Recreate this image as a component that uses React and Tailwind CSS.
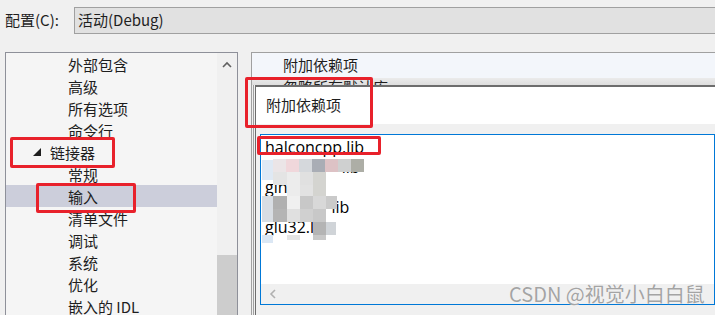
import React from 'react';

const treeRows = [
  { label: '外部包含', indent: 'child' },
  { label: '高级', indent: 'child' },
  { label: '所有选项', indent: 'child' },
  { label: '命令行', indent: 'child' },
  { label: '链接器', indent: 'parent' },
  { label: '常规', indent: 'child' },
  { label: '输入', indent: 'child', selected: true },
  { label: '清单文件', indent: 'child' },
  { label: '调试', indent: 'child' },
  { label: '系统', indent: 'child' },
  { label: '优化', indent: 'child' },
  { label: '嵌入的 IDL', indent: 'child' },
];

// pixelated blur over the hidden library names (page coords)
const mosaic = [
  [262, 160, 11, 20, '#dfe9f4'],
  [273, 159, 13, 13, '#ebe5e7'], [286, 159, 13, 13, '#f0d7db'], [299, 159, 13, 13, '#d5d8dc'],
  [312, 159, 13, 13, '#a9adb5'], [325, 159, 13, 13, '#ddc2c5'], [338, 159, 13, 13, '#cfd0d0'],
  [351, 159, 13, 13, '#adaea6'],
  [273, 172, 14, 13, '#e4e4e4'], [287, 172, 13, 13, '#ececec'], [300, 172, 13, 13, '#e0e0e0'],
  [313, 172, 13, 13, '#d4d4d0'],
  [287, 185, 13, 11, '#ececec'], [300, 185, 13, 11, '#e2e2e2'], [313, 185, 13, 11, '#d4d4d0'],
  [262, 196, 11, 26, '#d8dde3'], [273, 196, 14, 13, '#b0b0b0'], [287, 196, 13, 13, '#f0f0f0'],
  [300, 196, 13, 13, '#c8c8c8'], [313, 196, 13, 13, '#d8d8d8'], [326, 196, 11, 13, '#cacaca'],
  [273, 209, 14, 13, '#b4b4b4'], [287, 209, 13, 13, '#e0e0e0'], [300, 209, 13, 13, '#d0d0d0'],
  [313, 209, 13, 13, '#c8c8c8'],
  [313, 222, 13, 13, '#b4b4b4'], [326, 222, 10, 13, '#d0d4d8'],
  [262, 235, 11, 8, '#dbe7f4'], [287, 235, 13, 5, '#e4e4e4'], [313, 235, 13, 5, '#c8c8c8'],
];

function RedBox({ className }) {
  return <div className={`absolute rounded-[2px] border-[3px] border-[#e8212b] ${className}`} />;
}

function TreeRow({ label, indent, selected }) {
  return (
    <div className={`flex h-[22px] items-center ${selected ? 'bg-[#cccedb]' : ''}`}>
      {indent === 'parent' ? (
        <>
          <svg width="9" height="9" viewBox="0 0 9 9" className="ml-[27px] mr-[8px]">
            <polygon points="8,0 8,8 0,8" fill="#1e1e1e" />
          </svg>
          <span>{label}</span>
        </>
      ) : (
        <span className="pl-[62px]">{label}</span>
      )}
    </div>
  );
}

export default function App() {
  return (
    <div className="relative h-[315px] w-[715px] overflow-hidden bg-[#f0f0f0] font-['Noto_Sans_CJK_SC',sans-serif] text-[15px] text-[#1e1e1e]">
      <div className="flex h-[34px] items-end pl-[5px]">
        <div className="flex h-[27px] w-[69px] items-center">配置(C):</div>
        <div className="-mr-[20px] flex h-[27px] flex-1 items-center border border-[#a0a0a0] bg-[#e1e1e1] pl-[3px]">
          活动(Debug)
        </div>
      </div>

      <div className="mt-[18px] flex h-[400px]">
        {/* left tree */}
        <div className="ml-[5px] flex w-[233px] border border-[#8e9099] bg-[#f5f5f5]">
          <div className="flex-1 leading-none">
            {treeRows.map((r) => (
              <TreeRow key={r.label} {...r} />
            ))}
          </div>
          <div className="flex w-[20px] flex-col bg-[#f0f0f0]">
            <div className="flex h-[22px] items-center justify-center">
              <svg width="10" height="7" viewBox="0 0 10 7">
                <polyline points="1,6 5,2 9,6" fill="none" stroke="#606060" strokeWidth="1.6" />
              </svg>
            </div>
            <div className="mt-[180px] flex-1 bg-[#cdcdcd]" />
          </div>
        </div>

        {/* right property grid */}
        <div className="ml-[13px] flex flex-1 flex-col border-l border-t border-[#a0a0a0]">
          <div className="flex h-[25px] items-center bg-[#f3f6fb] pl-[31px]">附加依赖项</div>
          <div className="h-[7px] overflow-hidden bg-gradient-to-b from-[#ebebeb] to-[#dedede] pl-[31px]">
            <div className="pt-[1px] leading-none">忽略所有默认库</div>
          </div>
          <div className="ml-[1px] flex flex-1 border-l border-[#a0a0a0] pl-[1px]">
            <div className="flex flex-1 flex-col border-l border-t-2 border-[#6d6d6d] bg-[#f0f0f0]">
              <div className="flex h-[37px] items-center bg-white pl-[10px]">附加依赖项</div>
              <div className="ml-[4px] mt-[10px] flex h-[171px] flex-col border border-[#0078d7] bg-white font-['Open_Sans',sans-serif] text-[16px] text-black">
                <div className="flex-1 pl-[4px] pt-[2px] leading-[20px]">
                  <div>halconcpp.lib</div>
                  <div>M&nbsp;&nbsp;&nbsp;&nbsp;&nbsp;&nbsp;&nbsp;&nbsp;&nbsp;&nbsp;&nbsp;&nbsp;&nbsp;&nbsp;&nbsp;lib</div>
                  <div>gln</div>
                  <div>&nbsp;&nbsp;&nbsp;&nbsp;&nbsp;&nbsp;&nbsp;&nbsp;&nbsp;&nbsp;&nbsp;&nbsp;&nbsp;&nbsp;&nbsp;&nbsp;lib</div>
                  <div>glu32.l</div>
                </div>
                <div className="flex h-[20px] items-center bg-[#f0f0f0] pl-[8px]">
                  <svg width="8" height="10" viewBox="0 0 8 10">
                    <polyline points="6,1 2,5 6,9" fill="none" stroke="#b0b0b0" strokeWidth="1.6" />
                  </svg>
                </div>
              </div>
            </div>
          </div>
        </div>
      </div>

      {mosaic.map(([x, y, w, h, c], i) => (
        <div key={i} className="absolute" style={{ left: x, top: y, width: w, height: h, background: c }} />
      ))}

      <RedBox className="left-[10px] top-[137px] h-[31px] w-[105px]" />
      <RedBox className="left-[36px] top-[183px] h-[30px] w-[100px]" />
      <RedBox className="left-[245px] top-[77px] h-[51px] w-[128px]" />
      <RedBox className="left-[257px] top-[136px] h-[19px] w-[124px]" />

      <div className="absolute left-[509px] top-[279px] font-['Noto_Sans_CJK_SC',sans-serif] text-[20px] text-[#a4a4a4] [text-shadow:0_0_1px_#fff]">
        CSDN @视觉小白白鼠
      </div>
    </div>
  );
}
